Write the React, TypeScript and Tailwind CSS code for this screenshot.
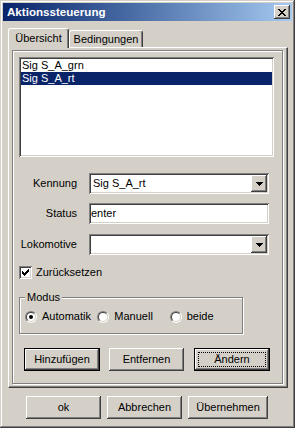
import React from 'react';

const raised =
  'shadow-[inset_-1px_-1px_0_#404040,inset_1px_1px_0_#ffffff,inset_-2px_-2px_0_#808080,inset_2px_2px_0_#d4d0c8]';
const sunken =
  'shadow-[inset_1px_1px_0_#808080,inset_-1px_-1px_0_#ffffff,inset_2px_2px_0_#404040,inset_-2px_-2px_0_#d4d0c8]';

// tiny pixel glyphs as in the classic theme
const CloseX = () => {
  const rows = [
    [0, 1, 6, 7],
    [1, 2, 5, 6],
    [2, 3, 4, 5],
    [3, 4],
    [2, 3, 4, 5],
    [1, 2, 5, 6],
    [0, 1, 6, 7],
  ];
  return (
    <svg width="8" height="7" shapeRendering="crispEdges">
      {rows.map((cols, y) => cols.map((x) => <rect key={`${x}-${y}`} x={x} y={y} width="1" height="1" fill="#000" />))}
    </svg>
  );
};

const Check = () => {
  const tops = [2, 3, 4, 3, 2, 1, 0];
  return (
    <svg width="7" height="7" shapeRendering="crispEdges">
      {tops.map((t, x) => (
        <rect key={x} x={x} y={t} width="1" height="3" fill="#000" />
      ))}
    </svg>
  );
};

const Arrow = () => (
  <svg width="7" height="4" shapeRendering="crispEdges">
    <rect x="0" y="0" width="7" height="1" fill="#000" />
    <rect x="1" y="1" width="5" height="1" fill="#000" />
    <rect x="2" y="2" width="3" height="1" fill="#000" />
    <rect x="3" y="3" width="1" height="1" fill="#000" />
  </svg>
);

const Combo = ({ value }: { value: string }) => (
  <div className={`w-[180px] h-[21px] bg-white p-[2px] flex ${sunken}`}>
    <div className="flex-1 pl-[2px] leading-[17px]">{value}</div>
    <div className={`w-[16px] h-[17px] bg-[#d4d0c8] flex items-center justify-center ${raised}`}>
      <Arrow />
    </div>
  </div>
);

const Radio = ({ label, checked }: { label: string; checked?: boolean }) => (
  <div className="w-[73px] flex items-center gap-[5px]">
    <div className="w-[12px] h-[12px] rounded-full border border-t-[#808080] border-l-[#808080] border-b-white border-r-white">
      <div className="w-full h-full rounded-full border border-t-[#404040] border-l-[#404040] border-b-[#d4d0c8] border-r-[#d4d0c8] bg-white flex items-center justify-center">
        {checked && <div className="w-[4px] h-[4px] rounded-full bg-black"></div>}
      </div>
    </div>
    <span className="leading-[13px]">{label}</span>
  </div>
);

const Button = ({
  label,
  className,
  isDefault,
  focused,
}: {
  label: string;
  className: string;
  isDefault?: boolean;
  focused?: boolean;
}) => (
  <div className={`${className} h-[23px] relative flex items-center justify-center bg-[#d4d0c8] ${isDefault ? 'border border-black' : ''}`}>
    <div className={`absolute inset-0 ${raised}`}></div>
    {focused && <div className="absolute inset-[3px] border border-dotted border-black"></div>}
    <span className="relative leading-[13px]">{label}</span>
  </div>
);

const Row = ({ label, children, className }: { label: string; children: React.ReactNode; className: string }) => (
  <div className={`flex items-center ${className}`}>
    <div className="w-[64px] text-right">{label}</div>
    <div className="ml-[12px]">{children}</div>
  </div>
);

export default function App() {
  const items = ['Sig S_A_grn', 'Sig S_A_rt'];

  return (
    <div
      className={`w-[295px] h-[428px] p-[3px] bg-[#d4d0c8] text-black text-[11px] font-['Liberation_Sans',Arial,sans-serif] shadow-[inset_-1px_-1px_0_#404040,inset_1px_1px_0_#d4d0c8,inset_-2px_-2px_0_#808080,inset_2px_2px_0_#ffffff]`}
    >
      {/* Title bar */}
      <div className="h-[18px] flex items-center justify-between pl-[4px] pr-[2px] bg-gradient-to-r from-[#0a246a] to-[#a6caf0]">
        <span className="text-white font-bold text-[11.6px]">Aktionssteuerung</span>
        <div className={`w-[16px] h-[14px] bg-[#d4d0c8] flex items-center justify-center ${raised}`}>
          <CloseX />
        </div>
      </div>

      {/* Tabs */}
      <div className="mt-[7px] ml-[5px] h-[19px] flex items-end">
        <div className="relative z-10 -mb-[1px] h-[20px] w-[61px] flex items-center justify-center bg-[#d4d0c8] border-l border-t border-white border-r border-r-[#404040] shadow-[inset_-1px_0_0_#808080] rounded-t-[3px]">
          Übersicht
        </div>
        <div className="h-[17px] w-[74px] flex items-center justify-center bg-[#d4d0c8] border-l border-t border-white border-r border-r-[#404040] shadow-[inset_-1px_0_0_#808080] rounded-t-[3px]">
          Bedingungen
        </div>
      </div>

      {/* Tab page */}
      <div className="ml-[5px] w-[280px] h-[341px] border border-white border-r-[#404040] border-b-[#404040] shadow-[inset_-1px_-1px_0_#808080]">
        <div className="ml-[3px] mt-[2px] w-[271px] h-[334px] border border-[#808080] shadow-[1px_1px_0_#ffffff,inset_1px_1px_0_#ffffff]">
          {/* List */}
          <div className={`ml-[6px] mt-[6px] w-[255px] h-[100px] bg-white p-[2px] ${sunken}`}>
            {items.map((it, i) => (
              <div
                key={it}
                className={`h-[13px] leading-[13px] pl-[1px] ${i === 1 ? 'bg-[#0a246a] text-white' : ''}`}
              >
                {it}
              </div>
            ))}
          </div>

          <Row label="Kennung" className="mt-[16px]">
            <Combo value="Sig S_A_rt" />
          </Row>
          <Row label="Status" className="mt-[9px]">
            <div className={`w-[180px] h-[21px] bg-white p-[2px] leading-[17px] ${sunken}`}>enter</div>
          </Row>
          <Row label="Lokomotive" className="mt-[10px]">
            <Combo value="" />
          </Row>

          {/* Checkbox */}
          <div className="mt-[11px] ml-[6px] flex items-center gap-[4px]">
            <div className={`w-[13px] h-[13px] bg-white flex items-center justify-center ${sunken}`}>
              <Check />
            </div>
            <span className="leading-[13px]">Zurücksetzen</span>
          </div>

          {/* Modus group */}
          <div className="relative mt-[18px] ml-[6px] w-[224px] h-[37px] border border-[#808080] shadow-[1px_1px_0_#ffffff,inset_1px_1px_0_#ffffff]">
            <span className="absolute left-[5px] -top-[7px] px-[2px] bg-[#d4d0c8] leading-[13px]">Modus</span>
            <div className="mt-[12px] pl-[5px] h-[13px] flex items-center">
              <Radio label="Automatik" checked />
              <Radio label="Manuell" />
              <Radio label="beide" />
            </div>
          </div>

          {/* Action buttons */}
          <div className="mt-[14px] ml-[11px] flex">
            <Button label="Hinzufügen" className="w-[76px]" isDefault />
            <Button label="Entfernen" className="w-[75px] ml-[9px]" />
            <Button label="Ändern" className="w-[76px] ml-[10px]" isDefault focused />
          </div>
        </div>
      </div>

      {/* Dialog buttons */}
      <div className="mt-[8px] ml-[23px] flex">
        <Button label="ok" className="w-[75px]" />
        <Button label="Abbrechen" className="w-[75px] ml-[6px]" />
        <Button label="Übernehmen" className="w-[80px] ml-[6px]" />
      </div>
    </div>
  );
}
